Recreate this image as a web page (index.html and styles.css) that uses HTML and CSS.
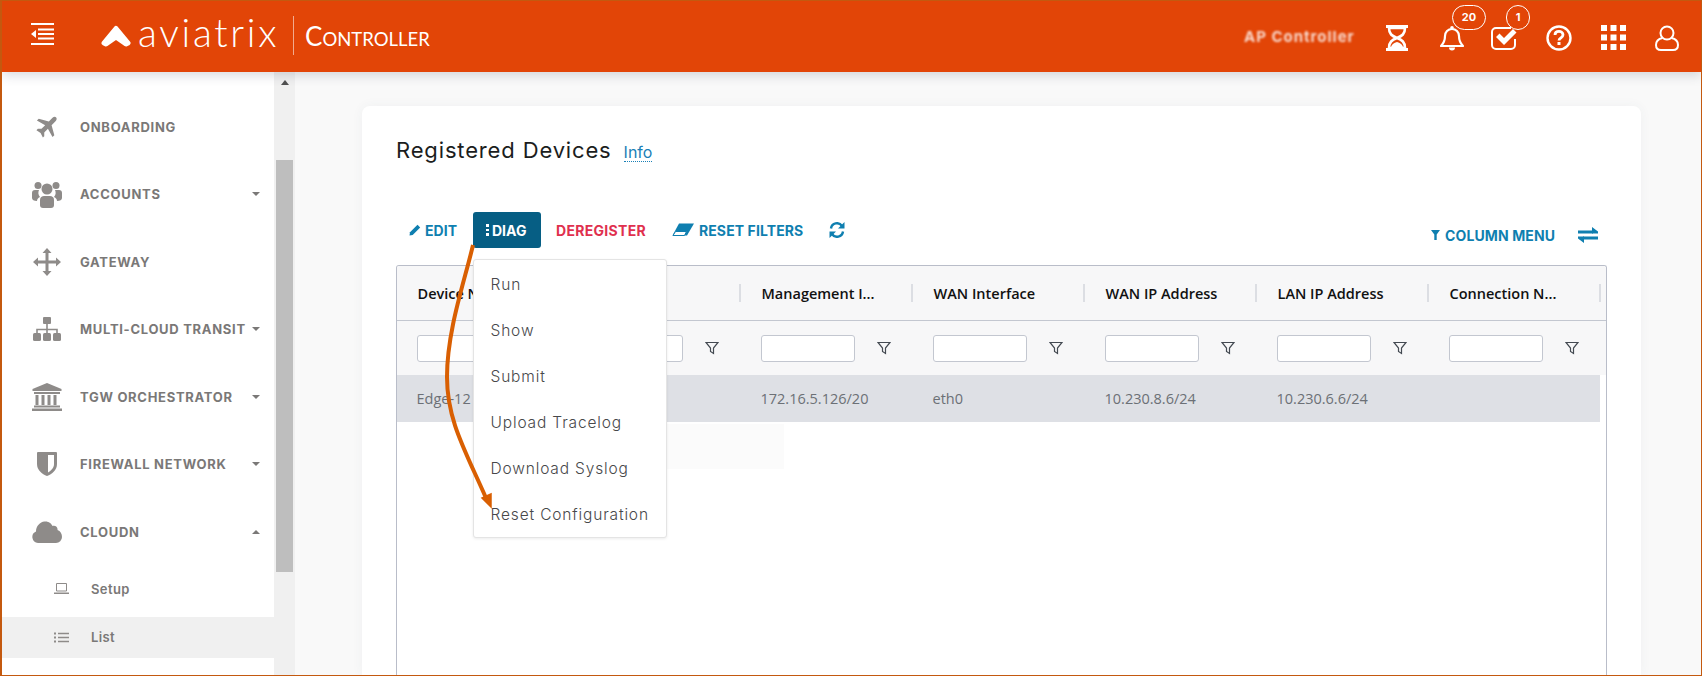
FILE: index.html
```html
<!DOCTYPE html>
<html lang="en">
<head>
<meta charset="utf-8">
<title>Registered Devices - Aviatrix Controller</title>
<link rel="stylesheet" href="styles.css">
</head>
<body>
<div class="app">
  <header class="topbar">
    <svg class="menu-toggle" viewBox="0 0 24 22" width="24" height="22"><path d="M1 1h23M8 6.500h16M8 11h16M8 15.500h16M1 21h23" stroke="#fff" stroke-width="2" fill="none"/><path d="M6 7v8L1 11z" fill="#fff"/></svg>
    <div class="brand">
      <svg class="brand-mark" viewBox="0 0 30 22" width="30" height="22"><path d="M15 3.500 27 18 25 19 15 12 5 19 3 18z" fill="#fff" stroke="#fff" stroke-width="5" stroke-linejoin="round"/></svg>
      <span class="brand-name">aviatrix</span>
      <span class="brand-divider"></span>
      <span class="brand-product"><span class="brand-cap">C</span>ONTROLLER</span>
    </div>
    <div class="topbar-right">
      <span class="ctrl-name">AP Controller</span>
      <div class="top-icons">
        <svg class="ti-hour" viewBox="0 0 24 26" width="24" height="26"><path d="M1 1.500h22M1 24.500h22" stroke="#fff" stroke-width="3"/><path d="M4 3c0 6 3 8 8 10 5-2 8-4 8-10zM12 13c-5 2-8 4-8 10h16c0-6-3-8-8-10z" fill="none" stroke="#fff" stroke-width="2.600"/><path d="M6 22c1-3 3-4 6-5 3 1 5 2 6 5z" fill="#fff"/></svg>
        <div class="ti-bell-wrap">
          <svg viewBox="0 0 24 26" width="24" height="26"><path d="M1 21c3-3 4-5 4-10 0-4 3-7 7-7s7 3 7 7c0 5 1 7 4 10z" fill="none" stroke="#fff" stroke-width="2.200" stroke-linejoin="round"/><path d="M9 22.500a3 3 0 0 0 6 0z" fill="#fff"/><circle cx="12" cy="2.800" r="1.800" fill="#fff"/></svg>
          <span class="badge badge-wide">20</span>
        </div>
        <div class="ti-check-wrap">
          <svg viewBox="0 0 27 26" width="27" height="26"><path d="M24 14v6a4 4 0 0 1-4 4H5a4 4 0 0 1-4-4V7a4 4 0 0 1 4-4h15" fill="none" stroke="#fff" stroke-width="2"/><path d="M5 12l3.500-3.500 4.500 4.500L22 4l3.500 3.500-12.500 12.500z" fill="#fff"/></svg>
          <span class="badge badge-one">1</span>
        </div>
        <svg class="ti-help" viewBox="0 0 26 26" width="26" height="26"><circle cx="13" cy="13" r="11.500" fill="none" stroke="#fff" stroke-width="2.400"/><path d="M9 10c0-2.500 2-3.600 4-3.600s4 1.300 4 3.400c0 3-4 3-4 5.700" fill="none" stroke="#fff" stroke-width="2.800"/><rect x="11.500" y="17" width="3" height="3" fill="#fff"/></svg>
        <svg class="ti-grid" viewBox="0 0 25 25" width="25" height="25"><path d="M0 0h6v6H0zM9.500 0h6v6h-6zM19 0h6v6h-6zM0 9.500h6v6H0zM9.500 9.500h6v6h-6zM19 9.500h6v6h-6zM0 19h6v6H0zM9.500 19h6v6h-6zM19 19h6v6h-6z" fill="#fff"/></svg>
        <svg class="ti-user" viewBox="0 0 24 26" width="24" height="26"><circle cx="12" cy="8" r="6.500" fill="none" stroke="#fff" stroke-width="2"/><path d="M7.500 13C3 14 1 17 1 20c0 3 2 5 5 5h12c3 0 5-2 5-5 0-3-2-6-6.500-7" fill="none" stroke="#fff" stroke-width="2"/></svg>
      </div>
    </div>
  </header>

  <div class="workspace">
    <aside class="sidebar">
      <nav class="nav">
        <a class="nav-item"><span class="nav-icon"><svg viewBox="0 0 24 24" width="22" height="22"><path d="M22 1.500c1 1 .5 3-1 4.500l-4 4 3 11-2 2-5-9-4 4v4l-1.500 1.500L5 18.500 .5 15.500 2 14h4l4-4-9-5 2-2 11 3 4-4c1.500-1.500 3-1.500 4-.5z" fill="#8e8b89"/></svg></span><span class="nav-label">ONBOARDING</span></a>
        <a class="nav-item"><span class="nav-icon"><svg viewBox="0 0 30 28" width="30" height="28"><g fill="#8e8b89"><circle cx="6" cy="5.500" r="3.500"/><circle cx="24" cy="5.500" r="3.500"/><circle cx="15" cy="9" r="5.500"/><path d="M0 13c0-2 1-3 3-3h4c-1 2-1 5 1 7-2 1-3 2-3 4-3 0-5-1-5-3zM30 13c0-2-1-3-3-3h-4c1 2 1 5-1 7 2 1 3 2 3 4 3 0 5-1 5-3z"/><path d="M8 20c0-3 2-4 4-4h6c2 0 4 1 4 4v5c0 2-1 3-3 3h-8c-2 0-3-1-3-3z"/></g></svg></span><span class="nav-label">ACCOUNTS</span><span class="caret"></span></a>
        <a class="nav-item"><span class="nav-icon"><svg viewBox="0 0 28 28" width="28" height="28"><path d="M14 0l4.500 5h-3v7.500H23v-3l5 4.500-5 4.500v-3h-7.500V23h3L14 28l-4.500-5h3v-7.500H5v3L0 14l5-4.500v3h7.500V5h-3z" fill="#8e8b89"/></svg></span><span class="nav-label">GATEWAY</span></a>
        <a class="nav-item"><span class="nav-icon"><svg viewBox="0 0 28 24" width="28" height="24"><g fill="#8e8b89"><rect x="10" y="0" width="8" height="7" rx="1"/><rect x="0" y="16" width="8" height="8" rx="1.500"/><rect x="10" y="16" width="8" height="8" rx="1.500"/><rect x="20" y="16" width="8" height="8" rx="1.500"/></g><path d="M14 7v9M4 16v-3.500h20V16" stroke="#8e8b89" stroke-width="1.600" fill="none"/></svg></span><span class="nav-label">MULTI-CLOUD TRANSIT</span><span class="caret"></span></a>
        <a class="nav-item"><span class="nav-icon"><svg viewBox="0 0 30 28" width="30" height="28"><g fill="#8e8b89"><path d="M15 0l14.500 6v2H.5V6z"/><rect x="2" y="9" width="26" height="2"/><rect x="3.500" y="12" width="3" height="10"/><rect x="9.500" y="12" width="3" height="10"/><rect x="15.500" y="12" width="3" height="10"/><rect x="21.500" y="12" width="3" height="10"/><rect x="2" y="22.500" width="26" height="2"/><rect x="0" y="25.500" width="30" height="2.500"/></g></svg></span><span class="nav-label">TGW ORCHESTRATOR</span><span class="caret"></span></a>
        <a class="nav-item"><span class="nav-icon"><svg viewBox="0 0 20 24" width="20" height="24"><path d="M1 0h18a1 1 0 0 1 1 1v11c0 6-5 10-10 12C5 22 0 18 0 12V1a1 1 0 0 1 1-1z" fill="#8e8b89"/><path d="M11 3h6v9c0 4-3 6.500-6 8.500z" fill="#fff"/></svg></span><span class="nav-label">FIREWALL NETWORK</span><span class="caret"></span></a>
        <a class="nav-item"><span class="nav-icon"><svg viewBox="0 0 30 22" width="30" height="22"><path d="M6 22a6 6 0 0 1-2-11.500C4 5 8 1 12.500.5c4-.5 7 2 8 4.500 3-1 5.500 1.500 5 4C28.500 10 30 13 30 16a6 6 0 0 1-6 6z" fill="#8e8b89"/></svg></span><span class="nav-label">CLOUDN</span><span class="caret caret-up"></span></a>
        <a class="nav-sub nav-sub-setup"><span class="sub-icon"><svg viewBox="0 0 15 11" width="15" height="11"><path d="M2.500.5h10v7.500h-10z" fill="none" stroke="#8e8b89"/><path d="M0 9.500h15V11H0z" fill="#8e8b89"/></svg></span><span class="sub-label">Setup</span></a>
        <a class="nav-sub is-active"><span class="sub-icon"><svg viewBox="0 0 15 11" width="15" height="11"><path d="M4 1.500h11M4 5.500h11M4 9.500h11" stroke="#8e8b89" stroke-width="1.600"/><path d="M0 .5h2v2H0zM0 4.500h2v2H0zM0 8.500h2v2H0z" fill="#8e8b89"/></svg></span><span class="sub-label">List</span></a>
      </nav>
    </aside>
    <div class="scrollbar">
      <span class="scroll-up"></span>
      <span class="scroll-thumb"></span>
    </div>
    <main class="main">
      <section class="card">
        <div class="title-row">
          <h1 class="title">Registered Devices</h1>
          <a class="info">Info</a>
        </div>
        <div class="toolbar">
          <div class="toolbar-left">
            <a class="tool tool-edit"><svg viewBox="0 0 12 12" width="12" height="12"><path d="M8.500.8l2.700 2.700-7.500 7.500L.5 11.500 1 8.300z" fill="#0f7fb0"/></svg>EDIT</a>
            <div class="diag-wrap">
              <a class="tool-diag"><span class="dots"><i></i><i></i><i></i></span>DIAG</a>
              <ul class="diag-menu">
                <li>Run</li>
                <li>Show</li>
                <li>Submit</li>
                <li>Upload Tracelog</li>
                <li>Download Syslog</li>
                <li>Reset Configuration</li>
              </ul>
            </div>
            <a class="tool tool-danger">DEREGISTER</a>
            <a class="tool tool-reset"><svg viewBox="0 0 22 14" width="22" height="14"><path d="M7 .5h15L15 12.500H.5z" fill="#0f7fb0"/><path d="M3.500 8.500h11l-2 4H1z" fill="#fff" stroke="#0f7fb0"/></svg>RESET FILTERS</a>
            <a class="tool tool-sync"><svg viewBox="0 0 16 16" width="16" height="16"><path d="M2 6.500A6 6 0 0 1 13 4" fill="none" stroke="#0f7fb0" stroke-width="2.400"/><path d="M15.500 0v6.500H9z" fill="#0f7fb0"/><path d="M14 9.500A6 6 0 0 1 3 12" fill="none" stroke="#0f7fb0" stroke-width="2.400"/><path d="M.5 16V9.500H7z" fill="#0f7fb0"/></svg></a>
          </div>
          <div class="toolbar-right">
            <a class="tool tool-columns"><svg viewBox="0 0 9 10" width="9" height="10"><path d="M0 0h9L5.700 4.500V10H3.300V4.500z" fill="#0f7fb0"/></svg>COLUMN MENU</a>
            <svg class="swap" viewBox="0 0 20 16" width="20" height="16"><path d="M0 5h15M20 11H5" stroke="#0f7fb0" stroke-width="3"/><path d="M14 0l6 4.500v2h-6zM6 16l-6-4.500v-2h6z" fill="#0f7fb0"/></svg>
          </div>
        </div>
        <div class="table">
          <div class="t-head">
            <div class="th"><span>Device Name</span><i class="sep"></i></div>
            <div class="th"><span></span><i class="sep"></i></div>
            <div class="th"><span>Management I...</span><i class="sep"></i></div>
            <div class="th"><span>WAN Interface</span><i class="sep"></i></div>
            <div class="th"><span>WAN IP Address</span><i class="sep"></i></div>
            <div class="th"><span>LAN IP Address</span><i class="sep"></i></div>
            <div class="th"><span>Connection N...</span><i class="sep"></i></div>
          </div>
          <div class="t-filter">
            <div class="tf"><input class="tf-input" type="text"><svg class="funnel" viewBox="0 0 14 14" width="14" height="14"><path d="M1 1.500h12L8.500 7v5.500l-3-2V7z" fill="none" stroke="#444a52" stroke-width="1.200"/></svg></div>
            <div class="tf"><input class="tf-input" type="text"><svg class="funnel" viewBox="0 0 14 14" width="14" height="14"><path d="M1 1.500h12L8.500 7v5.500l-3-2V7z" fill="none" stroke="#444a52" stroke-width="1.200"/></svg></div>
            <div class="tf"><input class="tf-input" type="text"><svg class="funnel" viewBox="0 0 14 14" width="14" height="14"><path d="M1 1.500h12L8.500 7v5.500l-3-2V7z" fill="none" stroke="#444a52" stroke-width="1.200"/></svg></div>
            <div class="tf"><input class="tf-input" type="text"><svg class="funnel" viewBox="0 0 14 14" width="14" height="14"><path d="M1 1.500h12L8.500 7v5.500l-3-2V7z" fill="none" stroke="#444a52" stroke-width="1.200"/></svg></div>
            <div class="tf"><input class="tf-input" type="text"><svg class="funnel" viewBox="0 0 14 14" width="14" height="14"><path d="M1 1.500h12L8.500 7v5.500l-3-2V7z" fill="none" stroke="#444a52" stroke-width="1.200"/></svg></div>
            <div class="tf"><input class="tf-input" type="text"><svg class="funnel" viewBox="0 0 14 14" width="14" height="14"><path d="M1 1.500h12L8.500 7v5.500l-3-2V7z" fill="none" stroke="#444a52" stroke-width="1.200"/></svg></div>
            <div class="tf"><input class="tf-input" type="text"><svg class="funnel" viewBox="0 0 14 14" width="14" height="14"><path d="M1 1.500h12L8.500 7v5.500l-3-2V7z" fill="none" stroke="#444a52" stroke-width="1.200"/></svg></div>
          </div>
          <div class="t-row">
            <div class="td">Edge-12</div>
            <div class="td"></div>
            <div class="td">172.16.5.126/20</div>
            <div class="td">eth0</div>
            <div class="td">10.230.8.6/24</div>
            <div class="td">10.230.6.6/24</div>
            <div class="td"></div>
          </div>
        </div>
      </section>
    </main>
  </div>
  <div class="ghost-tip"></div>
  <svg class="annotation" viewBox="0 0 1702 676" width="1702" height="676">
    <path d="M473 245C465 280 447 330 447 377C447 420 465 450 486 498" fill="none" stroke="#d95f02" stroke-width="4"/>
    <path d="M491 507 482 498 491 494z" fill="#d95f02" stroke="#d95f02" stroke-width="1.500"/>
  </svg>
</div>
</body>
</html>
```
FILE: styles.css
```css
* { box-sizing: border-box; }
html, body { margin: 0; padding: 0; }
body { font-family: "Inter", "Liberation Sans", sans-serif; background: #f9f9f9; }
ul { margin: 0; padding: 0; list-style: none; }
a { color: inherit; text-decoration: none; }

.app {
  position: relative;
  width: 1702px;
  height: 676px;
  overflow: hidden;
  display: flex;
  flex-direction: column;
  border-style: solid;
  border-color: #c4590f;
  border-width: 1px 1px 1px 2px;
}

/* top bar */
.topbar {
  position: relative;
  z-index: 2;
  height: 71px;
  flex: none;
  display: flex;
  align-items: center;
  background: #e24507;
  box-shadow: 0 4px 10px rgba(60, 70, 90, .18);
  color: #fff;
}
.menu-toggle { margin-left: 28px; flex: none; margin-top: -6px; }
.brand { display: flex; align-items: center; margin-left: 47px; margin-top: -2px; }
.brand-mark { flex: none; }
.brand-name {
  margin-left: 7px;
  font-family: "Lato", sans-serif;
  font-weight: 300;
  font-size: 39px;
  line-height: 40px;
  letter-spacing: 2.700px;
  width: 147px;
  margin-top: -7px;
}
.brand-divider { width: 1px; height: 39px; background: rgba(255, 255, 255, .55); margin: 0 11px 0 8px; }
.brand-product { font-family: "Lato", sans-serif; font-size: 18.500px; letter-spacing: 0; font-weight: 400; line-height: 26px; margin-top: 3px; }
.brand-cap { font-size: 26px; }
.topbar-right { margin-left: auto; display: flex; align-items: center; }
.ctrl-name { font-size: 15px; font-weight: 700; letter-spacing: 1px; color: #fff; filter: blur(1.200px); width: 110px; white-space: nowrap; opacity: .8; margin-top: -1px; }
.top-icons { display: flex; align-items: center; margin-left: 31px; margin-right: 22px; margin-top: 2px; }
.ti-hour { margin-left: 0; }
.ti-bell-wrap, .ti-check-wrap { position: relative; height: 26px; }
.ti-bell-wrap { margin-left: 31px; }
.ti-check-wrap { margin-left: 27px; }
.ti-help { margin-left: 28px; }
.ti-grid { margin-left: 29px; }
.ti-user { margin-left: 29px; }
.badge {
  position: absolute;
  top: -20px;
  height: 25px;
  background: #e24507;
  border: 1px solid #fff;
  border-radius: 13px;
  display: flex;
  align-items: center;
  justify-content: center;
  font-size: 11px;
  font-weight: 700;
  color: #fff;
}
.badge-wide { left: 12px; width: 34px; }
.badge-one { left: 15px; width: 24px; }

/* layout */
.workspace { flex: 1; display: flex; min-height: 0; }
.sidebar { width: 272px; flex: none; background: #fff; }
.nav { padding-top: 21px; }
.nav-item { height: 67.500px; display: flex; align-items: center; color: #7a7877; }
.nav-icon { width: 78px; padding-left: 33px; flex: none; display: flex; justify-content: center; padding-right: 21px; }
.nav-icon svg { flex: none; }
.nav-label { font-size: 13px; font-weight: 700; letter-spacing: .7px; white-space: nowrap; }
.caret { margin-left: auto; margin-right: 14px; width: 0; height: 0; border-left: 4.500px solid transparent; border-right: 4.500px solid transparent; border-top: 4.500px solid #7a7877; }
.caret-up { border-top: 0; border-bottom: 4.500px solid #7a7877; }
.nav-sub { height: 41px; display: flex; align-items: center; color: #7a7877; }
.nav-sub-setup { height: 46px; margin-bottom: 5px; }
.nav-sub.is-active { background: #f0f0f0; }
.sub-icon { margin-left: 52px; width: 37px; display: flex; flex: none; }
.sub-label { font-size: 13px; font-weight: 600; letter-spacing: .4px; }

.scrollbar { width: 21px; flex: none; background: #f0f0f0; padding: 0 2px; display: flex; flex-direction: column; align-items: center; }
.scroll-up { width: 0; height: 0; margin-top: 8px; border-left: 4.500px solid transparent; border-right: 4.500px solid transparent; border-bottom: 5px solid #505050; }
.scroll-thumb { width: 17px; height: 412px; background: #bebebe; margin-top: 75px; }

.main { flex: 1; min-width: 0; padding: 34px 60px 0 67px; background: #f9f9f9; display: flex; }
.card {
  position: relative;
  flex: 1;
  background: #fff;
  border-radius: 8px 8px 0 0;
  box-shadow: 0 0 12px rgba(60, 70, 90, .05);
  padding: 28px 34px 0;
  display: flex;
  flex-direction: column;
}

.title-row { display: flex; align-items: center; height: 32px; }
.title { margin: 0; font-size: 22px; font-weight: 400; letter-spacing: .85px; color: #1b1d20; white-space: nowrap; }
.info { margin-left: 12px; margin-top: 4px; font-size: 16px; color: #1a80b6; border-bottom: 1px dotted #1a80b6; line-height: 18px; }

.toolbar { margin-top: 46px; height: 53px; display: flex; justify-content: space-between; align-items: flex-start; flex: none; }
.toolbar-left { display: flex; align-items: center; height: 36px; padding-left: 13px; }
.toolbar-right { display: flex; align-items: center; height: 24px; margin-top: 11px; padding-right: 9px; }
.tool { display: flex; align-items: center; font-size: 14px; font-weight: 700; color: #0f7fb0; letter-spacing: .1px; white-space: nowrap; }
.tool-edit svg { margin-right: 4px; }
.tool-edit { width: 64px; }
.diag-wrap { position: relative; flex: none; }
.tool-diag { display: flex; align-items: center; height: 36px; width: 68px; padding-left: 13px; background: #065e84; color: #fff; border-radius: 3px; font-size: 14px; font-weight: 700; }
.dots { display: flex; flex-direction: column; gap: 2px; margin-right: 3px; }
.dots i { display: block; width: 3px; height: 2.500px; background: #fff; }
.tool-danger { margin-left: 15px; color: #e0304e; letter-spacing: .3px; }
.tool-reset { margin-left: 26px; }
.tool-reset svg { margin-right: 5px; }
.tool-sync { margin-left: 26px; }
.tool-columns svg { margin-right: 5px; }
.swap { margin-left: 23px; }

.diag-menu {
  position: absolute;
  z-index: 3;
  top: 47px;
  left: 0;
  width: 194px;
  height: 279px;
  padding-top: 1px;
  background: #fff;
  border: 1px solid #e4e4e4;
  border-radius: 3px;
  box-shadow: 0 1px 3px rgba(0, 0, 0, .08);
}
.diag-menu li { height: 46px; padding-left: 16.500px; display: flex; align-items: center; font-size: 15.500px; font-weight: 300; color: #47484a; white-space: nowrap; letter-spacing: .85px; }

/* table */
.table {
  flex: 1;
  border: 1px solid #b9bdc9;
  border-bottom: 0;
  border-radius: 3px 3px 0 0;
  font-family: "Open Sans", "Liberation Sans", sans-serif;
  overflow: hidden;
}
.t-head, .t-filter, .t-row { display: grid; grid-template-columns: repeat(7, 172px); background: #f7f7f8; }
.t-head { height: 55px; border-bottom: 1px solid #c3c7d0; }
.t-filter { height: 54px; }
.th { display: flex; align-items: center; padding-left: 20.500px; font-size: 14.500px; font-weight: 600; color: #111; }
.th span { white-space: nowrap; }
.sep { margin-left: auto; width: 2px; height: 18px; background: #dcdee3; }
.tf { display: flex; align-items: center; padding-left: 20px; }
.tf-input { width: 94px; height: 27px; border: 1px solid #c3c7d0; border-radius: 3px; background: #fff; padding: 0; }
.funnel { margin-left: 22px; }
.t-row { height: 47px; background: #dee0e5; width: 1203px; }
.td { display: flex; align-items: center; padding-left: 19.500px; font-size: 14.500px; color: #6c7076; white-space: nowrap; overflow: hidden; }

/* overlays */
.ghost-tip { position: absolute; left: 665px; top: 423px; width: 117px; height: 45px; background: #fbfbfb; }
.annotation { position: absolute; left: -2px; top: -1px; z-index: 5; pointer-events: none; }
```
